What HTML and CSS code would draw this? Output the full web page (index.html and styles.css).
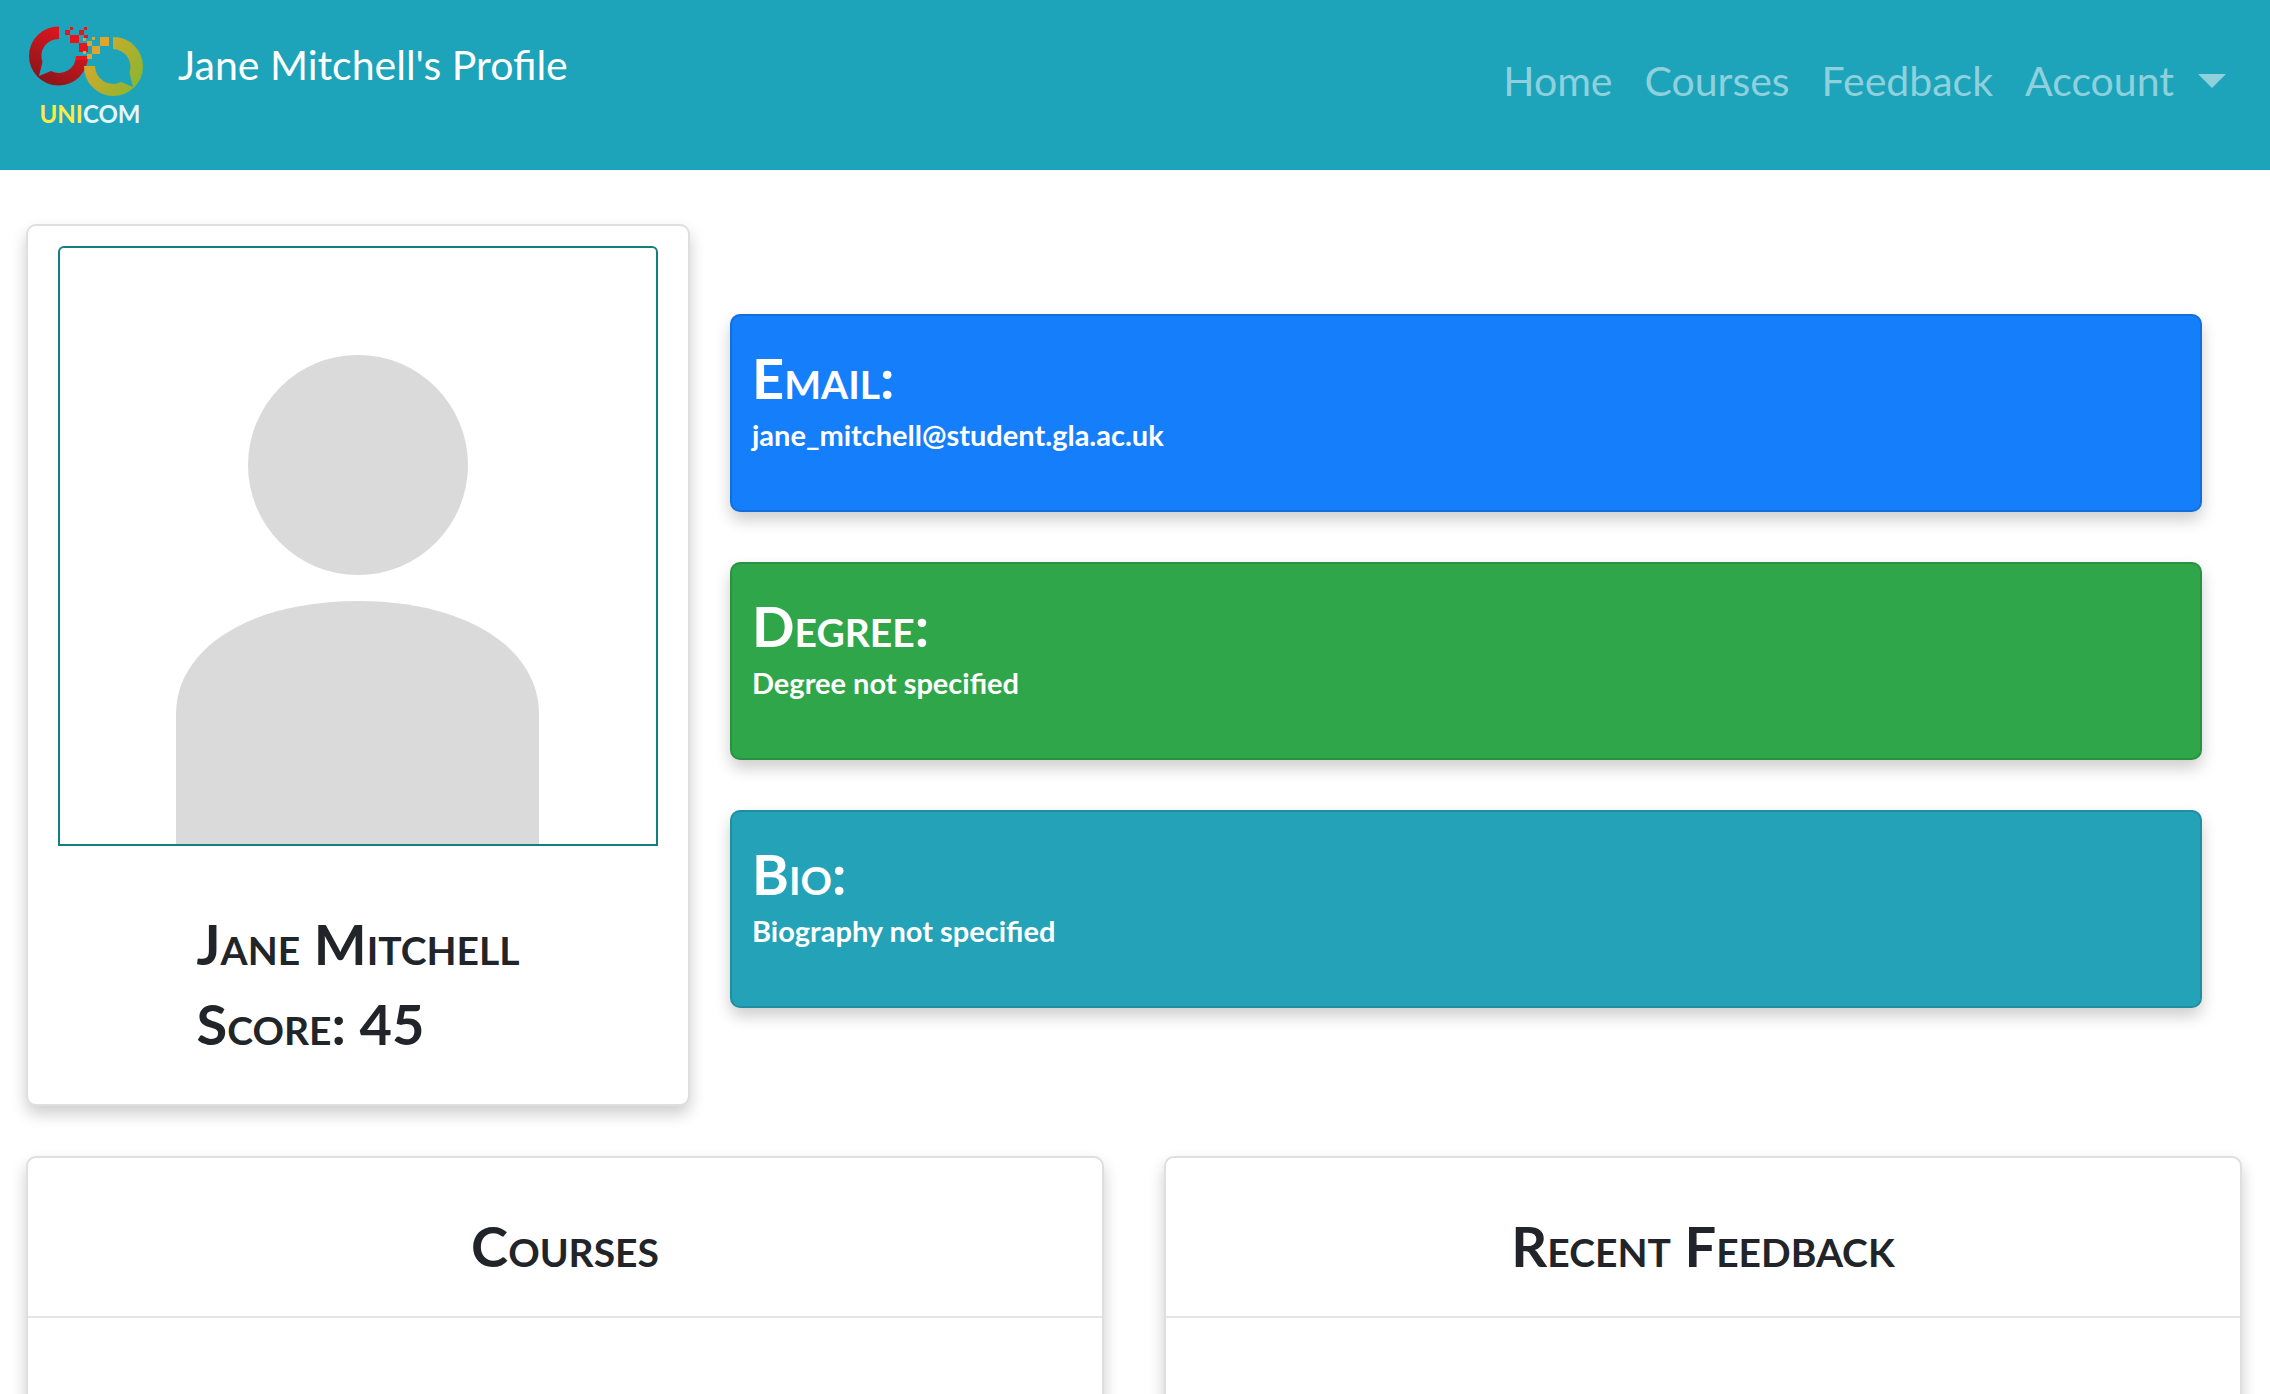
FILE: index.html
```html
<!DOCTYPE html>
<html lang="en">
<head>
<meta charset="utf-8">
<meta name="viewport" content="width=device-width, initial-scale=1">
<title>Jane Mitchell's Profile</title>
<link rel="stylesheet" href="styles.css">
</head>
<body>
<header class="navbar">
  <a class="brand" href="#">
    <svg class="logo" viewBox="28 24 116 108" role="img" aria-label="Unicom">
      <defs>
        <linearGradient id="red" x1="0.8" y1="0" x2="0.2" y2="1"><stop offset="0.2" stop-color="#d9161f"/><stop offset="1" stop-color="#851519"/></linearGradient>
        <linearGradient id="gold" x1="0" y1="0.3" x2="1" y2="0.9"><stop offset="0.1" stop-color="#d3a92b"/><stop offset="0.9" stop-color="#8db52f"/></linearGradient>
      </defs>
      <path fill="url(#red)" d="M59 26.500A29.500 29.500 0 1 0 88 56H76A17 17 0 0 1 51 71L39 76L42.500 62A17 17 0 0 1 59 39Z"/>
      <path fill="url(#gold)" d="M113 37A29.500 29.500 0 1 1 84 66H95A18 18 0 0 0 121 82L133 87L129.500 73A18 18 0 0 0 113 49Z"/>
      <path fill="#e8141d" d="M65 30h5v5h-5zM70 27h3v3h-3zM70 35h9v8h-9zM79 30h5v5h-5zM84 27h3v3h-3zM84 35h4v3h-4zM79 43h9v9h-9zM76 56h12v4h-12z"/>
      <path fill="#dfa52d" d="M83 38h3v3h-3zM87 41h5v5h-5zM92 37h3v3h-3zM100 37h9v9h-9zM92 46h8v8h-8zM87 54h5v5h-5zM83 51h3v3h-3z"/>
      <text class="logo-text" x="90" y="123" text-anchor="middle"><tspan class="logo-uni">UNI</tspan><tspan class="logo-com">COM</tspan></text>
    </svg>
    <span class="brand-title">Jane Mitchell's Profile</span>
  </a>
  <nav class="nav">
    <a class="nav-link" href="#">Home</a>
    <a class="nav-link" href="#">Courses</a>
    <a class="nav-link" href="#">Feedback</a>
    <button class="nav-link account" type="button" aria-haspopup="true">Account<span class="caret"></span></button>
  </nav>
</header>
<main class="page">
  <section class="profile">
    <article class="card person">
      <svg class="avatar" viewBox="0 0 596 596" role="img" aria-label="Profile picture">
        <circle cx="298" cy="217" r="110"/>
        <path d="M116 596V466C116 400 190 353 298 353S479 400 479 466V596Z"/>
      </svg>
      <div class="person-text">
        <h1 class="heading">Jane Mitchell</h1>
        <p class="heading">Score: 45</p>
      </div>
    </article>
    <div class="details">
      <article class="card detail email"><h2 class="heading">Email:</h2><p class="value">jane_mitchell@student.gla.ac.uk</p></article>
      <article class="card detail degree"><h2 class="heading">Degree:</h2><p class="value">Degree not specified</p></article>
      <article class="card detail bio"><h2 class="heading">Bio:</h2><p class="value">Biography not specified</p></article>
    </div>
  </section>
  <section class="panels">
    <article class="card panel"><h2 class="heading panel-title">Courses</h2></article>
    <article class="card panel"><h2 class="heading panel-title">Recent Feedback</h2></article>
  </section>
</main>
</body>
</html>
```
FILE: styles.css
```css
* { box-sizing: border-box; }
body {
  margin: 0;
  background: #fff;
  color: #212529;
  font-family: Lato, sans-serif;
}
h1, h2, p { margin: 0; }

.navbar {
  display: flex;
  justify-content: space-between;
  align-items: center;
  min-height: 170px;
  padding: 0 44px 0 28px;
  background: #1da4bb;
}
.brand {
  display: flex;
  align-items: flex-start;
  gap: 34px;
  color: #fff;
  text-decoration: none;
  padding-bottom: 14px;
}
.logo { width: 116px; height: 108px; overflow: visible; }
.logo-text { font-size: 24px; font-weight: 700; }
.logo-uni { fill: #ffe94a; }
.logo-com { fill: #e3f6fa; }
.brand-title { font-size: 41px; line-height: 82px; }

.nav { display: flex; align-items: center; gap: 32px; padding-bottom: 8px; }
.nav-link {
  display: flex;
  align-items: center;
  padding: 0;
  border: 0;
  background: none;
  color: #8ed1dd;
  font: inherit;
  font-size: 41px;
  line-height: 72px;
  text-decoration: none;
}
.account { gap: 24px; }
.caret { border: 14px solid transparent; border-top-color: currentColor; border-bottom: 0; }

.page { padding: 54px 28px 54px 26px; }
.card {
  background: #fff;
  border: 2px solid #dfdfdf;
  border-radius: 10px;
  box-shadow: 0 8px 16px rgba(0, 0, 0, 0.2);
}
.heading {
  font-size: 56px;
  font-weight: 700;
  line-height: 80px;
  font-variant: small-caps;
}

.profile { display: flex; align-items: center; gap: 40px; margin-bottom: 50px; }
.person {
  flex: none;
  display: flex;
  flex-direction: column;
  align-items: center;
  padding: 20px 30px 40px;
}
.avatar {
  width: 600px;
  height: 600px;
  border: 2px solid #138080;
  border-radius: 6px 6px 0 0;
  fill: #dadada;
}
.person-text { margin-top: 58px; }

.details { flex: 1; display: flex; flex-direction: column; gap: 50px; margin-right: 40px; padding-bottom: 8px; }
.detail { min-height: 198px; padding: 22px 20px; color: #fff; border-color: rgba(0, 0, 0, 0.12); }
.email { background-color: #157efb; }
.degree { background-color: #30a64a; }
.bio { background-color: #24a2b8; }
.value { font-size: 29px; font-weight: 700; line-height: 34px; }

.panels { display: grid; grid-template-columns: 1fr 1fr; gap: 60px; }
.panel { min-height: 400px; }
.panel-title { padding: 48px 20px 30px; border-bottom: 2px solid #e5e5e5; text-align: center; }
```
